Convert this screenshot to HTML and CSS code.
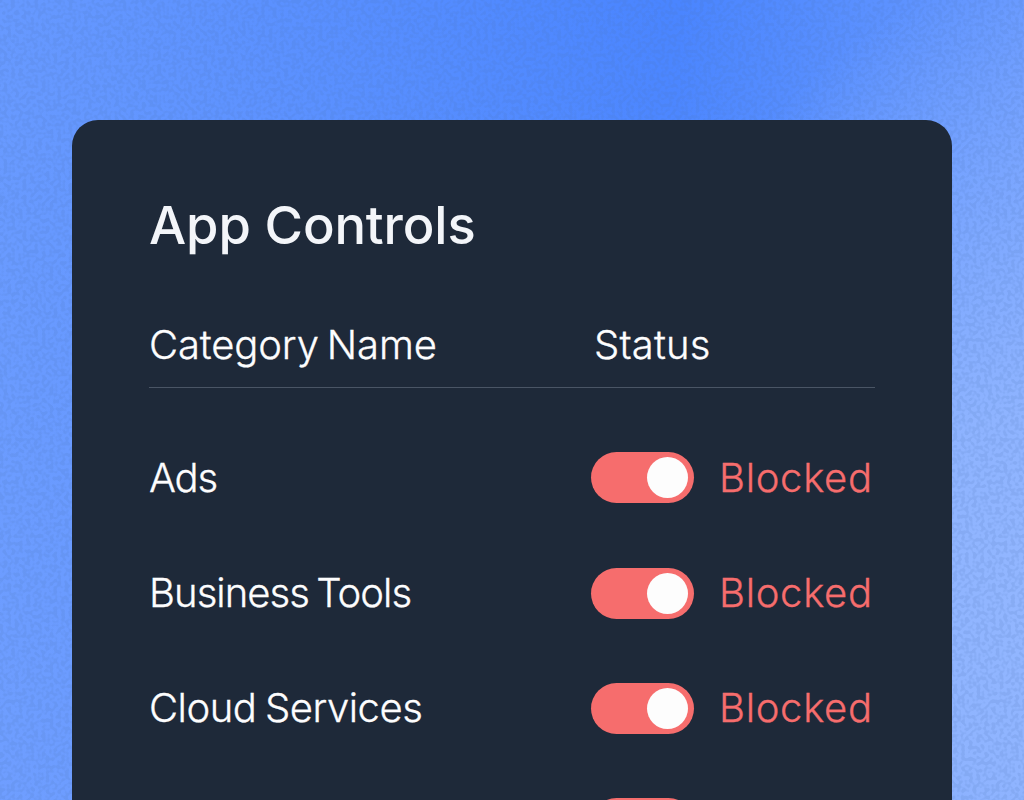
FILE: index.html
```
<!DOCTYPE html>
<html lang="en">
<head>
    <meta charset="UTF-8">
    <meta name="viewport" content="width=device-width, initial-scale=1.0">
    <title>App Controls</title>
    <link rel="stylesheet" href="styles.css">
</head>
<body>

    <!-- Grain over the blue backdrop -->
    <svg class="grain" aria-hidden="true">
        <filter id="grain" x="0" y="0" width="100%" height="100%" color-interpolation-filters="sRGB">
            <feTurbulence type="fractalNoise" baseFrequency="0.26" numOctaves="1" seed="4" />
            <feColorMatrix values="0 0 0 0 0.3  0 0 0 0 0.46  0 0 0 0 0.72  7 0 0 0 -3.1" />
        </filter>
        <rect width="100%" height="100%" filter="url(#grain)" />
    </svg>

    <main class="panel">
        <h1>App Controls</h1>

        <div class="row head">
            <span class="name category">Category Name</span>
            <span class="status">Status</span>
        </div>

        <div class="row">
            <span class="name ads">Ads</span>
            <span class="toggle"></span>
            <span class="label">Blocked</span>
        </div>
        <div class="row">
            <span class="name business">Business Tools</span>
            <span class="toggle"></span>
            <span class="label">Blocked</span>
        </div>
        <div class="row">
            <span class="name cloud">Cloud Services</span>
            <span class="toggle"></span>
            <span class="label">Blocked</span>
        </div>
        <div class="row">
            <span class="name"></span>
            <span class="toggle"></span>
        </div>
    </main>

</body>
</html>
```
FILE: styles.css
```
* {
    box-sizing: border-box;
}

body {
    margin: 0;
    height: 100vh;
    overflow: hidden;
    font-family: Inter, "Liberation Sans", sans-serif;
    font-weight: 300;
    color: #fdfdfe;
    background:
        radial-gradient(ellipse 400px 620px at 1024px 600px, #92b6ff 0%, rgba(146, 182, 255, 0.9) 30%, rgba(146, 182, 255, 0) 100%),
        linear-gradient(0deg, rgba(130, 170, 255, 0.35) 0, rgba(130, 170, 255, 0) 100%),
        linear-gradient(93deg, #6799ff 0, #4a85ff 62%, #4a85ff 64%, #6c9cff 100%);
}

/* Fine noise behind the panel */
.grain {
    position: absolute;
    top: 0;
    left: 0;
    width: 100%;
    height: 100%;
    opacity: 0.14;
}

.panel {
    position: relative;
    width: 880px;
    height: calc(100vh - 120px);
    margin: 120px auto 0;
    padding: 73px 77px 0;
    background: #1e2939;
    border-radius: 26px 26px 0 0;
    overflow: hidden;
}

h1 {
    margin: 0;
    height: 65px;
    font-size: 52.5px;
    line-height: 64px;
    font-weight: 550;
    letter-spacing: -0.15px;
    color: #f3f5f9;
    white-space: nowrap;
}

.row {
    display: flex;
    align-items: center;
    height: 115.2px;
    font-size: 40px;
    line-height: 50px;
    white-space: nowrap;
    -webkit-text-stroke: 0.3px currentColor;
}

.row.head {
    align-items: flex-start;
    height: 130px;
    margin-bottom: 32.3px;
    padding-top: 62px;
    border-bottom: 1px solid #4a5565;
}

.name {
    width: 442px;
}

.category {
    letter-spacing: -0.15px;
    word-spacing: -3px;
}

.ads {
    letter-spacing: -1.2px;
}

.business {
    letter-spacing: -0.95px;
    word-spacing: -3px;
}

.cloud {
    letter-spacing: -0.5px;
    word-spacing: -2px;
}

.status {
    margin-left: 3px;
    letter-spacing: 0.15px;
}

/* Switch in the blocked position */
.toggle {
    display: flex;
    align-items: center;
    justify-content: flex-end;
    width: 102.5px;
    height: 51px;
    padding-right: 5.2px;
    background: #f66d6d;
    border-radius: 26px;
}

.toggle::after {
    content: "";
    width: 41px;
    height: 41px;
    background: #fdfdfd;
    border-radius: 50%;
}

.label {
    margin-left: 25.5px;
    letter-spacing: 0.7px;
    color: #f66d6d;
}
```
